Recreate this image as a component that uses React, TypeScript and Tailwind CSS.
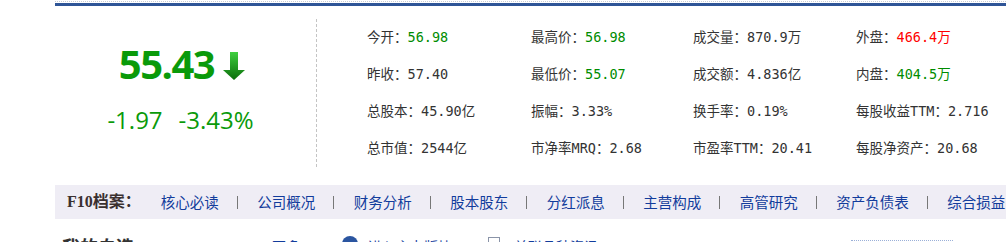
import React from 'react';

interface Quote {
  label: string;
  value: string;
  tone?: 'up' | 'down';
}

const rows: Quote[][] = [
  [
    { label: '今开：', value: '56.98', tone: 'down' },
    { label: '最高价：', value: '56.98', tone: 'down' },
    { label: '成交量：', value: '870.9万' },
    { label: '外盘：', value: '466.4万', tone: 'up' },
  ],
  [
    { label: '昨收：', value: '57.40' },
    { label: '最低价：', value: '55.07', tone: 'down' },
    { label: '成交额：', value: '4.836亿' },
    { label: '内盘：', value: '404.5万', tone: 'down' },
  ],
  [
    { label: '总股本：', value: '45.90亿' },
    { label: '振幅：', value: '3.33%' },
    { label: '换手率：', value: '0.19%' },
    { label: '每股收益TTM：', value: '2.716' },
  ],
  [
    { label: '总市值：', value: '2544亿' },
    { label: '市净率MRQ：', value: '2.68' },
    { label: '市盈率TTM：', value: '20.41' },
    { label: '每股净资产：', value: '20.68' },
  ],
];

const f10Links = ['核心必读', '公司概况', '财务分析', '股本股东', '分红派息', '主营构成', '高管研究', '资产负债表', '综合损益'];

const toneClass = (tone?: 'up' | 'down') =>
  tone === 'up' ? 'text-[#ff0000]' : tone === 'down' ? 'text-[#008c00]' : 'text-[#333]';

const DownArrow: React.FC = () => (
  <svg width="24" height="29" viewBox="0 0 24 29" className="ml-[8px] mb-[2px]">
    <defs>
      <linearGradient id="arrowFill" x1="0" y1="0" x2="0" y2="1">
        <stop offset="0" stopColor="#3fcf3f" />
        <stop offset="1" stopColor="#0b6d0b" />
      </linearGradient>
    </defs>
    <path d="M8 0 H16 V18 H23 L12 28 L1 18 H8 Z" fill="url(#arrowFill)" />
  </svg>
);

const App: React.FC = () => {
  return (
    <div className="w-[1006px] h-[242px] overflow-hidden bg-white pl-[55px]" style={{ fontFamily: '"Noto Sans", "Noto Sans CJK SC", sans-serif' }}>
      {/* Top rule */}
      <div className="mt-[1px] border-t border-dotted border-[#c8ccd4]" />
      <div className="mt-[1px] h-[3px] bg-[#2f5597]" />

      {/* Quote summary */}
      <div className="flex pt-[13px] h-[179px]">
        <div className="w-[262px] h-[148px] border-r border-dashed border-[#c4c4c4] flex flex-col items-center">
          <div className="flex items-end mt-[26px] mr-[6px] h-[38px]">
            <span className="text-[40px] leading-[38px] font-bold text-[#0a9a0a] tracking-[-1.5px]" style={{ fontFamily: '"Open Sans", "Noto Sans", sans-serif' }}>
              55.43
            </span>
            <DownArrow />
          </div>
          <div className="flex gap-[16px] mt-[22px] text-[24px] leading-[30px] text-[#0a9a0a] mr-[10px]" style={{ fontFamily: '"Open Sans", "Noto Sans", sans-serif' }}>
            <span>-1.97</span>
            <span>-3.43%</span>
          </div>
        </div>

        <div
          className="grid grid-cols-[164px_162px_163px_auto] auto-rows-[37px] pl-[50px] text-[13.5px] text-[#333]"
          style={{ fontFamily: '"DejaVu Sans Mono", "Noto Sans CJK SC", monospace' }}
        >
          {rows.flat().map((q) => (
            <div key={q.label} className="flex items-center whitespace-nowrap">
              <span>{q.label}</span>
              <span className={toneClass(q.tone)}>{q.value}</span>
            </div>
          ))}
        </div>
      </div>

      {/* F10 nav */}
      <div className="h-[34px] bg-[#efedf5] flex items-center pl-[12px] whitespace-nowrap">
        <span className="text-[16px] font-bold text-[#3a3030] mr-[20px]" style={{ fontFamily: '"Liberation Serif", "Noto Sans CJK SC", serif' }}>
          F10档案：
        </span>
        {f10Links.map((name, i) => (
          <React.Fragment key={name}>
            {i > 0 && <span className="w-px h-[13px] bg-[#777] ml-[18px] mr-[19.5px]" />}
            <a className="text-[14.5px] text-[#123c9c]" style={{ fontFamily: '"Noto Sans CJK SC", sans-serif' }}>
              {name}
            </a>
          </React.Fragment>
        ))}
      </div>

      {/* My watchlist row (cut off) */}
      <div className="flex items-start mt-[14px] whitespace-nowrap" style={{ fontFamily: '"Noto Sans CJK SC", sans-serif' }}>
        <span className="ml-[7px] text-[18px] leading-[26px] font-bold text-[#333]">我的自选</span>
        <span className="ml-[138px] mt-[3px] text-[14px] text-[#123c9c]">更多</span>
        <span className="ml-[42px] mt-[3px] w-[16px] h-[16px] rounded-full bg-[#2b55a0]" />
        <span className="ml-[10px] mt-[3px] text-[14px] text-[#123c9c]">进入主力版块</span>
        <span className="ml-[36px] mt-[4px] w-[12px] h-[12px] border border-[#8a94a8] bg-white" />
        <span className="ml-[14px] mt-[3px] text-[14px] text-[#123c9c]">关联品种资讯</span>
        <span className="ml-[253px] mt-[7px] w-[102px] h-[10px] border-t border-dotted border-[#9bb0d8]" />
      </div>
    </div>
  );
};

export default App;
